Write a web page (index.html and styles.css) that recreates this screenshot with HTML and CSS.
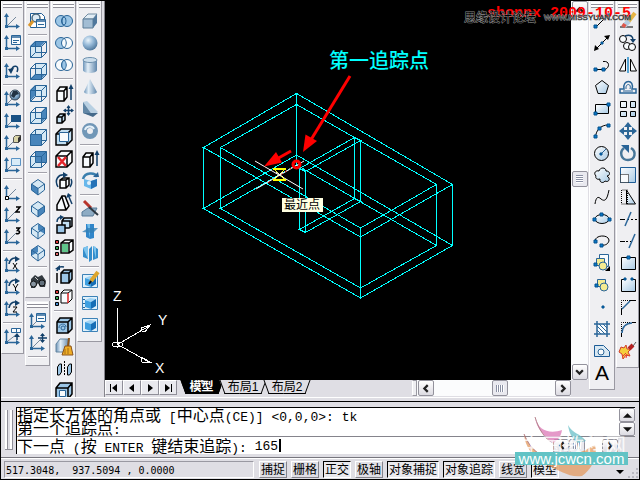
FILE: index.html
```html
<!DOCTYPE html>
<html lang="zh-CN">
<head>
<meta charset="utf-8">
<title>模型</title>
<link rel="stylesheet" href="styles.css">
</head>
<body>
<svg class="defs" aria-hidden="true">
  <defs>
    <linearGradient id="metal" x1="0" y1="0" x2="1" y2="0"><stop offset="0" stop-color="#6b93b8"/><stop offset=".35" stop-color="#e4eff8"/><stop offset="1" stop-color="#5f86ab"/></linearGradient>
    <radialGradient id="ball" cx=".38" cy=".32" r=".7"><stop offset="0" stop-color="#eaf4fb"/><stop offset=".5" stop-color="#93b7d6"/><stop offset="1" stop-color="#50789c"/></radialGradient>
    <linearGradient id="pale" x1="0" y1="0" x2="1" y2="1"><stop offset="0" stop-color="#ffffff"/><stop offset="1" stop-color="#a9cbe6"/></linearGradient>
    <symbol id="axes" viewBox="0 0 22 22"><path class="b" d="M4.500 6V17M4 16.500H15"/><path class="bf" d="M4.500 3L2 7H7zM18 16.500L14 14V19zM3 15h3v3H3z"/></symbol>
    <symbol id="diag" viewBox="0 0 22 22"><path class="g" d="M6 15L14 7"/></symbol>
    <symbol id="wire" viewBox="0 0 22 22"><path class="b1" d="M3.500 8.500h11v11h-11zM8.500 3.500h11v11h-11zM3.500 8.500l5-5M14.500 8.500l5-5M3.500 19.500l5-5M14.500 19.500l5-5"/></symbol>
    <symbol id="iso" viewBox="0 0 22 22"><path class="b1" d="M11 3.500L17.500 8V14L11 19L4.500 14V8zM4.500 8L11 12.500L17.500 8M11 12.500V19"/></symbol>
    <symbol id="bluebox" viewBox="0 0 22 22"><path fill="#9fd4f5" d="M6 8l5-2 6 1-5 3z"/><path fill="#3d9fe0" d="M6 8l6 2v7l-6-2z"/><path fill="#176eb5" d="M12 10l5-3v7l-5 3z"/></symbol>
  </defs>
</svg>

<main class="workspace">
  <div class="dock dock-left">
    <div class="column narrow">
      <div class="toolbar" role="toolbar" aria-label="UCS">
        <button class="tool" aria-label="UCS"><svg><use href="#axes"/><use href="#diag"/></svg></button>
        <button class="tool" aria-label="命名 UCS"><svg><use href="#axes"/><path class="b1 wf" d="M9.500 3.500h9v9h-9z"/><path class="b" d="M9 5h10"/><path class="b1" d="M11 8.500h6M11 10.500h4"/></svg></button>
        <hr>
        <button class="tool" aria-label="上一个 UCS"><svg><use href="#axes"/><path class="n" d="M9 11C11 4 18 5 15 12"/><path class="nf" d="M6 9l6-1-3 6z"/></svg></button>
        <hr>
        <button class="tool" aria-label="世界 UCS"><svg><use href="#axes"/><use href="#diag"/><circle cx="13" cy="7" r="5" fill="url(#ball)" stroke="#345"/><path d="M11 3l4 0 2 3-3 1-2 3-3-2z" fill="#234"/></svg></button>
        <button class="tool" aria-label="对象 UCS"><svg><use href="#axes"/><path class="g" d="M6 15l4-4"/><path fill="#195184" d="M9 5h10v7H9z"/></svg></button>
        <button class="tool" aria-label="面 UCS"><svg><use href="#axes"/><use href="#diag"/><path fill="#d8d3a6" stroke="#555" d="M11.500 5.500l2-2h5v5l-2 2h-5z"/><path fill="#333" d="M16 6l3-3v5l-3 3z"/></svg></button>
        <button class="tool" aria-label="视图 UCS"><svg><use href="#axes"/><path class="g" d="M6 15l4-4"/><path fill="#d8ebf8" stroke="#5b93c4" d="M9.500 4.500h9v7h-9z"/></svg></button>
        <hr>
        <button class="tool" aria-label="原点 UCS"><svg><use href="#axes"/><use href="#diag"/><path class="k1 wf" d="M3.500 14.500h3v3h-3z"/></svg></button>
        <button class="tool" aria-label="Z 轴矢量"><svg><use href="#axes"/><use href="#diag"/><path class="k2" d="M14 3h4l-4 5h4"/></svg></button>
        <button class="tool" aria-label="三点 UCS"><svg><use href="#axes"/><use href="#diag"/><path class="k2" d="M14 2h3.500l-2 2.500c3 0 3 4-1.500 3"/></svg></button>
        <hr>
        <button class="tool" aria-label="绕 X 轴旋转"><svg><use href="#axes"/><path class="n" d="M7 10C8 4 13 3 15 5"/><path class="nf" d="M13 2l5 3-5 3z"/><path class="k1" d="M11 9l4 6M15 9l-4 6"/></svg></button>
        <button class="tool" aria-label="绕 Y 轴旋转"><svg><use href="#axes"/><path class="n" d="M7 10C8 4 13 3 15 5"/><path class="nf" d="M13 2l5 3-5 3z"/><path class="k1" d="M11 8l2.500 4 2.500-4M13.500 12v3"/></svg></button>
        <button class="tool" aria-label="绕 Z 轴旋转"><svg><use href="#axes"/><path class="n" d="M7 10C8 4 13 3 15 5"/><path class="nf" d="M13 2l5 3-5 3z"/><path class="k1" d="M11 9h4l-4 5h4"/></svg></button>
        <hr>
        <button class="tool" aria-label="应用 UCS"><svg><use href="#axes"/><path class="b1 wf" d="M9.500 2.500h9v4h-9zM14.500 2.500v4"/><path class="g" d="M6 15l9-7"/><path class="n" d="M15 14V9"/><path class="nf" d="M12 11l3-4 3 4z"/></svg></button>
      </div>
    </div>

    <div class="column">
      <div class="toolbar" role="toolbar" aria-label="视图">
        <button class="tool" aria-label="命名视图"><svg><path d="M3.500 3.500h11l3 3v11h-14z" fill="#fff" stroke="#1d5c96"/><circle cx="9" cy="8" r="4" fill="#dceaf4" stroke="#49687e" stroke-width="1.500"/><path d="M6 11l-4 5" stroke="#db962b" stroke-width="3"/><path class="b1 wf" d="M9.500 9.500h9v8h-9z"/><path class="b" d="M9 11h10"/><path class="b1" d="M11 14.500h6"/></svg></button>
        <hr>
        <button class="tool" aria-label="俯视"><svg><path class="pf" d="M3 8h11v11H3z"/><path class="df" d="M3 8l5-5h11l-5 5z"/><use href="#wire"/></svg></button>
        <button class="tool" aria-label="仰视"><svg><path class="pf" d="M8 3h11v11H8z"/><path class="df" d="M3 19l5-5h11l-5 5z"/><use href="#wire"/></svg></button>
        <button class="tool" aria-label="左视"><svg><path class="pf" d="M8 3h11v11H8z"/><path class="df" d="M3 8l5-5v11l-5 5z"/><use href="#wire"/></svg></button>
        <button class="tool" aria-label="右视"><svg><path class="pf" d="M3 8h11v11H3z"/><path class="df" d="M14 8l5-5v11l-5 5z"/><use href="#wire"/></svg></button>
        <button class="tool" aria-label="主视"><svg><path class="pf" d="M3 8l5-5h11v11l-5 5H3z"/><use href="#wire"/><path class="df" d="M4 9h10v10H4z"/></svg></button>
        <button class="tool" aria-label="后视"><svg><path class="pf" d="M3 8h11v11H3z"/><path class="df" d="M8 3h11v11H8z"/><use href="#wire"/></svg></button>
        <hr>
        <button class="tool" aria-label="西南等轴测"><svg><path class="pf" d="M11 4l6 4v6l-6 5-6-5V8z"/><path class="df" d="M4 8l7 4v7l-7-5z"/><use href="#iso"/></svg></button>
        <button class="tool" aria-label="东南等轴测"><svg><path class="pf" d="M11 4l6 4v6l-6 5-6-5V8z"/><path class="df" d="M18 8l-7 4v7l7-5z"/><use href="#iso"/></svg></button>
        <button class="tool" aria-label="东北等轴测"><svg><path class="pf" d="M11 4l6 4v6l-6 5-6-5V8z"/><path class="df" d="M11 4l7 4v6l-7-4z"/><use href="#iso"/></svg></button>
        <button class="tool" aria-label="西北等轴测"><svg><path class="pf" d="M11 4l6 4v6l-6 5-6-5V8z"/><path class="df" d="M11 4L4 8v6l7-4z"/><use href="#iso"/></svg></button>
        <hr>
        <button class="tool" aria-label="相机"><svg><path d="M4 9l4-4 3 2 4-2 4 6-1 6h-5l-2-4-3 5H4z" fill="#333a40"/><circle cx="6.500" cy="14" r="3" fill="#8794a0" stroke="#111"/><circle cx="15" cy="13" r="3" fill="#62707c" stroke="#111"/><path d="M8 7l3 3" stroke="#ccc"/></svg></button>
      </div>
      <div class="toolbar" role="toolbar" aria-label="UCS II">
        <button class="tool" aria-label="UCS 设置"><svg><use href="#axes"/><use href="#diag"/><path class="b1 wf" d="M9.500 3.500h9v8h-9z"/><path class="b" d="M9 5h10"/><path class="b1" d="M11 8.500h6"/></svg></button>
        <button class="tool" aria-label="移动 UCS"><svg><use href="#axes"/><use href="#diag"/><path class="n" d="M15.500 2v8M11 6h9"/><path class="nf" d="M13 4l2.500-3L18 4zM13 8l2.500 3L18 8z"/></svg></button>
        <hr>
      </div>
    </div>

    <div class="column">
      <div class="toolbar" role="toolbar" aria-label="实体编辑">
        <button class="tool" aria-label="并集"><svg><circle class="b1 mf" cx="8" cy="11" r="5.500"/><circle class="b1 mf" cx="14" cy="11" r="5.500"/><ellipse class="b1" cx="11" cy="11" rx="2" ry="4"/></svg></button>
        <button class="tool" aria-label="差集"><svg><circle class="b1 mf" cx="8" cy="11" r="5.500"/><circle class="b1 wf" cx="14" cy="11" r="5.500"/><path class="b1" d="M11 6c3 3 3 7 0 10"/></svg></button>
        <button class="tool" aria-label="交集"><svg><circle class="b1 wf" cx="8" cy="11" r="5.500"/><circle class="b1 wf" cx="14" cy="11" r="5.500"/><path class="b1 mf" d="M11 6c3 3 3 7 0 10c-3-3-3-7 0-10z"/></svg></button>
        <hr>
        <button class="tool" aria-label="拉伸面"><svg><path class="k2 wf" d="M4 9l3-4h7v10l-3 4H4zM4 9h7v10M11 9l3-4"/><path class="n" d="M18 18V5"/><path class="nf" d="M15.500 7L18 2l2.500 5z"/></svg></button>
        <button class="tool" aria-label="移动面"><svg><path class="k2 lf" d="M4 13l3-3h5v6l-3 3H4zM4 13h5v6M9 13l3-3"/><path class="n" d="M15.500 2v9M11 6.500h9"/><path class="nf" d="M13.500 4l2-3 2 3zM13.500 9l2 3 2-3zM13 4.500l-3 2 3 2zM18 4.500l3 2-3 2z"/></svg></button>
        <button class="tool" aria-label="偏移面"><svg><path class="k2 lf" d="M3 8l5-5h11v11l-5 5H3z"/><path class="k2" d="M3 8h11v11M14 8l5-5"/><path class="b1 wf" d="M6.500 6.500h9v9h-9z"/></svg></button>
        <button class="tool" aria-label="删除面"><svg><path class="k2 wf" d="M3 8l5-5h11v11l-5 5H3zM3 8h11v11M14 8l5-5"/><path d="M5 9l8 9M13 9l-8 9" stroke="#e3262b" stroke-width="2.500"/></svg></button>
        <button class="tool" aria-label="旋转面"><svg><path class="k2 wf" d="M7 10l3-2h6v7l-3 3H7zM7 10h6v8M13 10l3-2"/><path class="n" d="M5 17C1 10 5 4 12 5M17 17c2-3 2-6 1-8"/><path class="nf" d="M10 2l5 3-5 3z"/></svg></button>
        <button class="tool" aria-label="倾斜面"><svg><path class="k2 wf" d="M4 18V13l5-9h3l4 10-3 4H4zM9 5l4 13"/><path class="n" d="M19 12l-3-7"/><path class="nf" d="M13 6l2-5 4 3z"/></svg></button>
        <button class="tool" aria-label="复制面"><svg><path class="k2 lf" d="M9 7l2-3h8v8l-3 2H9zM9 7h8v7"/><path class="k2 mf" d="M4 11h8v8H4z"/><path class="n" d="M4 8c0-4 2-5 5-5"/><path class="nf" d="M7 1l4 2-4 3z"/></svg></button>
        <button class="tool" aria-label="着色面"><svg><path class="k2 wf" d="M8 7l4-3h8v10l-4 3H8zM8 7h8v10M16 7l4-3"/><path fill="#5fc48a" d="M9 8h6v8H9z"/><path fill="#d33" stroke="#000" d="M2.500 4.500h3v3h-3z"/><path fill="#3a5" stroke="#000" d="M2.500 10.500h3v3h-3z"/><path fill="#d66" stroke="#000" d="M2.500 16.500h3v3h-3z"/></svg></button>
        <hr>
        <button class="tool" aria-label="复制边"><svg><path class="k2 mf" d="M8 9l3-3h8v9l-3 4H8zM8 9h8v10M16 9l3-3"/><path class="k2" d="M4 9v10"/><path class="n" d="M4 7c1-4 3-5 7-4"/><path class="nf" d="M2 5l5-4v5z"/></svg></button>
        <button class="tool" aria-label="着色边"><svg><path class="k1 wf" d="M8 7l3-3h8v9l-4 4H8zM8 7h7M15 7l4-3"/><path d="M15 7v10" stroke="#d22" stroke-width="1.500"/><path fill="#d33" stroke="#000" d="M2.500 4.500h3v3h-3z"/><path fill="#3a5" stroke="#000" d="M2.500 10.500h3v3h-3z"/><path fill="#48c" stroke="#000" d="M2.500 16.500h3v3h-3z"/></svg></button>
        <hr>
        <button class="tool" aria-label="压印"><svg><path class="k2 mf" d="M4 8l3-4h12v11l-4 4H4zM4 8h11v11M15 8l4-4"/><path class="b1" d="M6 14c0-5 7-5 7-1"/><circle class="b1" cx="10" cy="14" r="2"/></svg></button>
        <button class="tool" aria-label="清除"><svg><path fill="url(#metal)" stroke="#6485a0" d="M3 8l4-5h9v13H3z"/><path d="M15 2l2 0-1 8h-2z" fill="#8b541c"/><path d="M12 10h6l2 9H9z" fill="#efad26" stroke="#8b541c"/><path d="M12 13v5M15 12v6" stroke="#a56c12"/></svg></button>
        <button class="tool" aria-label="分割"><svg><path class="k1 mf" d="M4.500 9l2-3h2v8l-2 3h-2zM14.500 9l2-3h2v8l-2 3h-2z"/><path class="k1" stroke-dasharray="2 1" d="M11.500 3v15"/></svg></button>
        <button class="tool" aria-label="抽壳"><svg><path class="k2 mf" d="M3 8l4-5h12v11l-4 5H3zM3 8h12v11M15 8l4-5"/><path class="b1 wf" d="M6.500 10.500h6v6h-6z"/></svg></button>
      </div>
    </div>

    <div class="column">
      <div class="toolbar" role="toolbar" aria-label="实体">
        <button class="tool" aria-label="长方体"><svg><path fill="#e2edf5" stroke="#738da3" d="M4 9l5-5h9l-4 5z"/><path fill="#a2bdd4" stroke="#5c7c97" d="M4 9h10v9H4z"/><path fill="#50789c" d="M14 9l4-5v9l-4 5z"/></svg></button>
        <button class="tool" aria-label="球体"><svg><circle cx="11" cy="11" r="7.500" fill="url(#ball)"/></svg></button>
        <button class="tool" aria-label="圆柱体"><svg><path d="M4 6v10c0 4 14 4 14 0V6z" fill="url(#metal)"/><ellipse cx="11" cy="6" rx="7" ry="2.500" fill="#ccdeec" stroke="#6e91ae"/></svg></button>
        <button class="tool" aria-label="圆锥体"><svg><path d="M11 3L5 16c1 3 12 3 13 0z" fill="url(#metal)"/></svg></button>
        <button class="tool" aria-label="楔体"><svg><path d="M4 4l4-1 11 11-5 4z" fill="#b9d0e2"/><path d="M4 4v11l10 3z" fill="#6287a6"/><path d="M4 15l10 4 5-4" fill="#456a8b"/></svg></button>
        <button class="tool" aria-label="圆环体"><svg><circle cx="11" cy="11" r="5.500" fill="none" stroke="#7197b7" stroke-width="5"/><path d="M6 10c1-4 7-5 9-1" fill="none" stroke="#e5f1f9" stroke-width="2"/></svg></button>
        <hr>
        <button class="tool" aria-label="拉伸"><svg><path class="k2 wf" d="M4 9l3-4h7v10l-3 4H4zM4 9h7v10M11 9l3-4"/><path class="n" d="M18 18V5"/><path class="nf" d="M15.500 7L18 2l2.500 5z"/></svg></button>
        <button class="tool" aria-label="旋转"><svg><path d="M5 9l7 2 6-2v7l-6 3-7-3z" fill="#67b7eb"/><path d="M12 11l6-2v7l-6 3z" fill="#2572b7"/><path d="M4 9c2-7 12-7 14-2" fill="none" stroke="#3a7fae" stroke-width="2.500"/><path class="bf" d="M14 7h6l-1-5z"/><circle cx="10" cy="13" r="2" fill="#e4f1fa"/></svg></button>
        <hr>
        <button class="tool" aria-label="剖切"><svg><path d="M3 14l6-4h9l-4 8H3z" fill="#8eacc4" stroke="#587b98"/><path d="M5 3l7 7" stroke="#b8352c" stroke-width="3"/><path d="M10 9l9 8" stroke="#2d3842" stroke-width="2"/></svg></button>
        <button class="tool" aria-label="切割"><svg><path d="M7 4h8v14l-4 1-4-2z" fill="#3186ca"/><path d="M8 4h3v14" fill="#72bce9"/><path d="M3 12l6-4h10l-5 5z" fill="#337fb5" opacity=".8"/></svg></button>
        <button class="tool" aria-label="干涉"><svg><path d="M4 6l5-2v13l-5-2zM10 7l3-3v14l-3 2zM14 4l5 3v9l-5 2z" fill="#358dcb"/><path d="M4 6l5-2v13M14 4l3 1v12" fill="#7dc4ee"/></svg></button>
        <hr>
        <button class="tool" aria-label="设置图形"><svg><path fill="#e0f1fb" stroke="#3d82b7" d="M3.500 4.500h15v13h-15z"/><use href="#bluebox"/><path d="M19 2l-7 9" stroke="#dda52c" stroke-width="4"/><path d="M12 11l-2 3" stroke="#111" stroke-width="2"/></svg></button>
        <button class="tool" aria-label="设置视图"><svg><path fill="#e0f1fb" stroke="#3d82b7" d="M3.500 4.500h15v13h-15z"/><path class="b1" d="M4 7.500h2M4 11.500h2M4 15.500h2"/><use href="#bluebox"/></svg></button>
        <button class="tool" aria-label="设置轮廓"><svg><path fill="#e0f1fb" stroke="#3d82b7" d="M3.500 4.500h15v13h-15z"/><use href="#bluebox"/></svg></button>
      </div>
    </div>
  </div>

  <section class="drawing" aria-label="绘图区">
    <div class="view">
      <svg class="model" viewBox="105 1 466 379" role="img" aria-label="三维线框">
        <g class="cy" shape-rendering="crispEdges">
          <path d="M296.500 93.500L203.500 147.500L360.500 237L452.500 184.500zM296.500 104.500L220.500 147.500L360.500 228L436.500 184.500z"/>
          <path d="M296.500 155L203.500 208.500L360.500 298L452.500 245.500zM296.500 165L220.500 208.500L360.500 288L436.500 245.500z"/>
          <path d="M296.500 93.500V165M203.500 147.500V208.500M220.500 147.500V208.500M452.500 184.500V245.500M436.500 184.500V245.500M360.500 228V298"/>
          <path d="M354.500 137.500L299.500 168.500L305.500 171.500L360.500 140.500zM354.500 198.500L299.500 229.500L305.500 232.500L360.500 201.500zM354.500 137.500V198.500M360.500 140.500V201.500M299.500 168.500V229.500M305.500 171.500V232.500"/>
        </g>
        <path class="wl" d="M255 161L303 189M304 161L256 189"/>
        <path d="M291 168L266 184" stroke="#f00" stroke-dasharray="2 3"/>
        <path d="M273 169h13M273 180h13" stroke="#ff0" stroke-width="2"/>
        <path d="M275 170l9 9M284 170l-9 9" stroke="#ff0"/>
        <path d="M276 172l7 5M283 172l-7 5" stroke="#fff"/>
        <circle cx="296.500" cy="164.500" r="3.500" fill="none" stroke="#f00" stroke-width="3"/>
        <path d="M350 76L309 143" stroke="#f00" stroke-width="3"/>
        <path d="M303 152L305.500 134.500L317 141z" fill="#f00"/>
        <path d="M291 151L275 160" stroke="#f00" stroke-width="3"/>
        <path d="M264 166.500L276 152L282 162.500z" fill="#f00"/>
        <g class="wl" shape-rendering="crispEdges">
          <path d="M117.500 344.500V308M117.500 344.500L150 325.500M117.500 344.500L150 362.500"/>
          <ellipse cx="117.500" cy="344.500" rx="5" ry="2.500"/>
          <path d="M141 328l9-3-5 7-3-1zM141 357l9 5-8 0-1-3z"/>
        </g>
        <g class="axis-name"><text x="113" y="301">Z</text><text x="158" y="325">Y</text><text x="155" y="373">X</text></g>
        <text class="callout" x="329" y="68">第一追踪点</text>
        <rect x="282" y="198" width="41" height="14" fill="#ffffe1"/>
        <text class="snap" x="284" y="209">最近点</text>
      </svg>
      <div class="vscroll">
        <button class="sb" aria-label="向上"><svg viewBox="0 0 8 8"><path d="M1 6l3-3 3 3"/></svg></button>
        <div class="track"><span class="thumb"></span></div>
        <button class="sb" aria-label="向下"><svg viewBox="0 0 8 8"><path d="M1 2l3 3 3-3"/></svg></button>
      </div>
    </div>
    <div class="sheetbar">
      <div class="nav">
        <button aria-label="第一个"><svg viewBox="0 0 10 10"><path d="M1 1h1v8H1zM8 1v8L3 5z"/></svg></button>
        <button aria-label="上一个"><svg viewBox="0 0 10 10"><path d="M7 1v8L2 5z"/></svg></button>
        <button aria-label="下一个"><svg viewBox="0 0 10 10"><path d="M3 1v8l5-4z"/></svg></button>
        <button aria-label="最后一个"><svg viewBox="0 0 10 10"><path d="M8 1h1v8H8zM2 1v8l5-4z"/></svg></button>
      </div>
      <div class="tabs" role="tablist">
        <button class="tab on" role="tab" aria-selected="true"><span>模型</span></button>
        <button class="tab" role="tab"><span>布局1</span></button>
        <button class="tab" role="tab"><span>布局2</span></button>
      </div>
      <div class="hscroll">
        <span class="split"></span>
        <button class="sb" aria-label="向左"><svg viewBox="0 0 8 8"><path d="M6 1L3 4l3 3"/></svg></button>
        <div class="track"><span class="thumb"></span></div>
        <button class="sb" aria-label="向右"><svg viewBox="0 0 8 8"><path d="M2 1l3 3-3 3"/></svg></button>
      </div>
    </div>
  </section>

  <div class="dock dock-right">
    <div class="column wide">
      <div class="toolbar" role="toolbar" aria-label="绘图">
        <button class="tool" aria-label="直线"><svg><path class="k1" d="M5 17L17 5"/><path class="dot" d="M3 15h3v3H3zM16 4h3v3h-3z"/></svg></button>
        <button class="tool" aria-label="构造线"><svg><path class="k1" d="M4 18L18 4"/><path d="M3 19l1-6 4 4zM19 3l-6 1 4 4z"/><path class="dot" d="M10 10h2v2h-2z"/></svg></button>
        <button class="tool" aria-label="多段线"><svg><path class="k1" d="M5 15.500h8M12 7.500c7-1 7 6 2 8"/><path class="dot" d="M3 14h3v3H3zM11 14h3v3h-3z"/></svg></button>
        <button class="tool" aria-label="正多边形"><svg><path class="k" fill="url(#pale)" d="M11 4.500l6.500 5-2.500 8H7L4.500 9.500z"/></svg></button>
        <button class="tool" aria-label="矩形"><svg><path class="k" fill="url(#pale)" d="M4.500 6.500h13v9h-13z"/><path class="dot" d="M3 14h3v3H3zM16 5h3v3h-3z"/></svg></button>
        <button class="tool" aria-label="圆弧"><svg><path class="k1" d="M4.500 17C5 10 10 5 17 5"/><path class="dot" d="M3 15h3v3H3zM7 7h3v3H7zM16 4h3v3h-3z"/></svg></button>
        <button class="tool" aria-label="圆"><svg><circle class="k" fill="url(#pale)" cx="10.500" cy="11.500" r="7"/><path class="b1" d="M10 12l5-5"/><path class="dot" d="M9 11h2v2H9z"/></svg></button>
        <button class="tool" aria-label="修订云线"><svg><path class="k" fill="url(#pale)" d="M5 12c-3-3 0-6 3-5 1-4 7-4 7 0 5 0 4 5 1 5 4 2 2 7-2 5-2 3-6 1-5-2-3 1-5-1-4-3z"/></svg></button>
        <button class="tool" aria-label="样条曲线"><svg><path class="k1" d="M4 18c1-7 3-8 6-5 4 3 6 1 8-9"/></svg></button>
        <button class="tool" aria-label="椭圆"><svg><ellipse class="k" fill="url(#pale)" cx="11" cy="11" rx="7" ry="4.500"/><path class="dot" d="M2 10h3v3H2zM9 5h3v3H9zM17 10h3v3h-3z"/></svg></button>
        <button class="tool" aria-label="椭圆弧"><svg><path class="k1" d="M4 11c0-6 13-7 14-1 0 3-3 6-8 5"/><path class="dot" d="M3 10h3v3H3zM9 14h3v3H9z"/></svg></button>
        <button class="tool" aria-label="插入块"><svg><path class="b1 wf" d="M8.500 2.500h9v12h-9z"/><path class="b1 yf" d="M5.500 6.500h8v7h-8z"/><circle class="b1 yf" cx="12" cy="14" r="4"/><path class="dot" d="M3 11h3v3H3z"/><path d="M19 14v5h-5z"/></svg></button>
        <button class="tool" aria-label="创建块"><svg><path class="b1 yf" d="M6.500 5.500h8v7h-8z"/><circle class="b1 yf" cx="13" cy="13" r="4"/><path class="dot" d="M4 10h3v3H4z"/></svg></button>
        <button class="tool" aria-label="点"><svg><path class="dot" d="M11 10h2v2h-2z"/></svg></button>
        <button class="tool" aria-label="图案填充"><svg><path class="wf" d="M6 6h10v10H6z"/><path class="b" d="M6 3v16M16 3v16M3 6h16M3 16h16"/><path class="b1" d="M6 12l4 4M6 8l8 8M8 6l8 8M12 6l4 4"/></svg></button>
        <button class="tool" aria-label="面域"><svg><path fill="#d9e8f2" stroke="#1d5c96" d="M3.500 5.500h9l6 6v5h-15z"/><circle class="b1 wf" cx="10" cy="12" r="3"/></svg></button>
        <button class="tool" aria-label="多行文字"><span class="letter">A</span></button>
      </div>
    </div>
    <div class="column last">
      <div class="toolbar" role="toolbar" aria-label="修改">
        <button class="tool" aria-label="删除"><svg><path class="k1" d="M3 17h13"/><path d="M18 3l-7 9" stroke="#e7b445" stroke-width="4"/><path d="M12 11l-5 5" stroke="#b5cde0" stroke-width="5"/><path d="M8 14l-2 3" stroke="#df574b" stroke-width="4"/></svg></button>
        <button class="tool" aria-label="复制"><svg><circle class="k1 wf" cx="6" cy="7" r="3.500"/><circle class="k1 wf" cx="10" cy="14" r="3.500"/><circle class="k1 wf" cx="15" cy="15" r="3.500"/><path class="n" d="M8 4c5-2 8 0 8 4"/><path class="nf" d="M13 7h6l-3 4z"/></svg></button>
        <button class="tool" aria-label="镜像"><svg><path class="k1 wf" d="M8.500 5v12h-6zM13.500 5v12h6z"/><path d="M11 3v16" stroke="#258bc9" stroke-width="1.500"/></svg></button>
        <button class="tool" aria-label="偏移"><svg><path class="b" d="M3 17h16v-4h-4c3-10-10-10-8 0H3z"/><path class="b1" d="M6 15h10M9 13c-1-6 6-6 4 0"/></svg></button>
        <button class="tool" aria-label="阵列"><svg><path class="k" fill="url(#pale)" d="M3.500 3.500h6v6h-6zM13.500 3.500h5v6h-5zM3.500 13.500h6v5h-6zM13.500 13.500h5v5h-5z"/></svg></button>
        <button class="tool" aria-label="移动"><svg><path d="M11 5v12M5 11h12" stroke="#2d6795" stroke-width="2"/><path class="bf" d="M11 2l4 5H7zM11 20l4-5H7zM2 11l5-4v8zM20 11l-5-4v8z"/></svg></button>
        <button class="tool" aria-label="旋转"><svg><path d="M7 6c-5 4-3 12 4 12s9-8 3-12" fill="none" stroke="#477699" stroke-width="2.500"/><path class="bf" d="M4 3h8v8z"/></svg></button>
        <button class="tool" aria-label="缩放"><svg><path fill="url(#pale)" stroke="#1d5c96" d="M3.500 3.500h15v15h-15z"/><path class="k1 wf" stroke-dasharray="1 1" d="M3.500 10.500h8v8h-8z"/></svg></button>
        <button class="tool" aria-label="拉伸"><svg><path class="k" fill="url(#pale)" d="M9.500 4l9 14h-9z"/><path class="k1" stroke-dasharray="1 1" d="M4.500 4v14h6V4z"/></svg></button>
        <button class="tool" aria-label="修剪"><svg><path class="k1" d="M3 11.500h5"/><path class="k1" stroke-dasharray="2 2" d="M10 11.500h10"/><path class="b" d="M8 18l6-14"/></svg></button>
        <button class="tool" aria-label="延伸"><svg><path class="k1" d="M3 11.500h5"/><path class="k1" stroke-dasharray="2 2" d="M9 11.500h5"/><path class="b" d="M12 18l6-14"/></svg></button>
        <button class="tool" aria-label="打断于点"><svg><path class="k" fill="url(#pale)" d="M4.500 5.500h14v12h-14z"/><path class="dot" d="M10 4h3v3h-3z"/></svg></button>
        <button class="tool" aria-label="打断"><svg><path fill="url(#pale)" d="M4 6h14v11H4z"/><path class="k1" d="M7 5.500H4.500v12h14v-12H15"/><path class="dot" d="M7 4h2v2H7zM14 4h2v2h-2z"/></svg></button>
        <button class="tool" aria-label="倒角"><svg><path class="k1" stroke-dasharray="1 1" d="M4.500 13V4.500H14"/><path class="k1" d="M4.500 19v-6M13 4.500h6"/><path class="b" d="M5 13l8-8"/></svg></button>
        <button class="tool" aria-label="圆角"><svg><path class="k1" stroke-dasharray="1 1" d="M4.500 13V4.500H14"/><path class="k1" d="M4.500 19v-4M15 4.500h4"/><path class="b" d="M5 15c0-6 4-10 10-10"/></svg></button>
        <button class="tool" aria-label="分解"><svg><path d="M4 7l3 1 2-3 1 4 4 0-3 3 2 4-4-1-3 4-1-5-3-2z" fill="#f4cf3d" stroke="#d23b28"/><path d="M12 9l4-4" stroke="#b52222" stroke-width="4"/><path d="M16 6l3-4" stroke="#555"/><path d="M5 17l4-4M9 18l1-4" stroke="#e33"/></svg></button>
      </div>
    </div>
  </div>
</main>

<section class="command" aria-label="命令行">
  <span class="handle"></span>
  <div class="console">
    <div class="history">
      <div class="log">
        <p>指定长方体的角点或<span class="latin"> [</span>中心点<span class="latin">(CE)] &lt;0,0,0&gt;: tk</span></p>
        <p>第一个追踪点<span class="latin">:</span></p>
      </div>
      <div class="updown">
        <button class="sb" aria-label="上一行"><svg viewBox="0 0 8 8"><path class="fill" d="M0 6l4-4 4 4z"/></svg></button>
        <button class="sb" aria-label="下一行"><svg viewBox="0 0 8 8"><path class="fill" d="M0 2l4 4 4-4z"/></svg></button>
      </div>
    </div>
    <div class="entry">
      <label for="cmd">下一点<span class="latin"> (</span>按<span class="latin"> ENTER </span>键结束追踪<span class="latin">): </span></label>
      <input id="cmd" class="latin" type="text" value="165"><span class="caret"></span>
      <div class="leftright">
        <button class="sb" aria-label="向左"><svg viewBox="0 0 8 8"><path d="M6 1L3 4l3 3"/></svg></button>
        <div class="track"><span class="thumb"></span></div>
        <button class="sb" aria-label="向右"><svg viewBox="0 0 8 8"><path d="M2 1l3 3-3 3"/></svg></button>
      </div>
    </div>
  </div>
</section>

<footer class="status">
  <output class="coords">517.3048,  937.5094 , 0.0000</output>
  <button class="mode">捕捉</button>
  <button class="mode">栅格</button>
  <button class="mode down" aria-pressed="true">正交</button>
  <button class="mode">极轴</button>
  <button class="mode down" aria-pressed="true">对象捕捉</button>
  <button class="mode down" aria-pressed="true">对象追踪</button>
  <button class="mode">线宽</button>
  <button class="mode down" aria-pressed="true">模型</button>
  <button class="menu" aria-label="状态栏菜单"><svg viewBox="0 0 8 5"><path d="M0 0h8L4 4z"/></svg></button>
  <svg class="resize" viewBox="0 0 10 10"><path d="M8 0h2v2H8zM8 4h2v2H8zM8 8h2v2H8zM4 4h2v2H4zM4 8h2v2H4zM0 8h2v2H0z"/></svg>
</footer>

<div class="stamp"><span class="date">shonnx 2009-10-5</span><span class="forum">思缘设计论坛</span><span class="site">WWW.MISSYUAN.COM</span></div>
<div class="logo">
  <svg viewBox="0 0 120 64">
    <path d="M27 3c3 14 15 17 27 13-1 7-5 11-9 13C36 22 28 14 27 3z" fill="#dd78b7"/>
    <path d="M60 11c5 9 12 8 18 16l-9 2c-5-5-8-10-9-18z" fill="#69bfc8"/>
    <path d="M16 20c6 14 15 23 32 24 17 0 28-8 39-13 3 12-3 24-13 31-13 2-22-6-38-12C25 43 17 33 16 20z" fill="#e39a60"/>
    <path d="M27 3c4 13 10 22 18 26M16 20c6 15 16 23 30 26" fill="none" stroke="#9e5a66"/>
  </svg>
  <span class="brand">中国教程网</span>
  <span class="url">www.jcwcn.com</span>
</div>
</body>
</html>
```
FILE: styles.css
```css
* { box-sizing: border-box; }

:root {
  --face: #dfdee4;
  --bar: #efeff2;
  --edge: #9a99a2;
  --blue: #2a6598;
}

body {
  margin: 0;
  height: 100vh;
  display: flex;
  flex-direction: column;
  position: relative;
  overflow: hidden;
  border: 1px solid #000;
  background: var(--face);
  color: #000;
  font: 12px/14px "Liberation Sans", "Noto Sans CJK SC", sans-serif;
}

button {
  margin: 0;
  padding: 0;
  border: 0;
  background: none;
  color: inherit;
  font: inherit;
}

.defs { position: absolute; width: 0; height: 0; }

.workspace { flex: 1; min-height: 0; display: flex; overflow: hidden; }

/* Docked toolbars */
.dock { display: flex; flex: none; gap: 1px; overflow: hidden; }
.dock-left { padding-right: 2px; border-right: 1px solid #85848c; }
.dock-right { padding-left: 1px; }
.column { width: 25px; display: flex; flex-direction: column; gap: 3px; }
.column.narrow { width: 23px; }
.column.wide { width: 26px; }
.column.last { width: 23px; }

.toolbar {
  display: flex;
  flex-direction: column;
  align-items: center;
  flex: none;
  padding-bottom: 5px;
  background: var(--bar);
  border-left: 1px solid #fff;
  border-right: 1px solid var(--edge);
  border-bottom: 1px solid var(--edge);
}

.toolbar::before {
  content: "";
  align-self: stretch;
  height: 6px;
  margin: 1px 1px 2px;
  background: linear-gradient(#fff 0 2px, #8f8e98 2px 3px, #fff 3px 5px, #8f8e98 5px 6px);
}

.toolbar hr {
  width: 19px;
  height: 2px;
  margin: 2px 0;
  border: 0;
  background: #a3a2ab;
  border-bottom: 1px solid #fff;
}

.tool { width: 22px; height: 22px; display: grid; place-items: center; flex: none; }
.tool svg { width: 22px; height: 22px; display: block; }
.letter { font: 21px/22px "Liberation Sans", sans-serif; }

/* Icon strokes and fills */
.b { fill: none; stroke: var(--blue); stroke-width: 1.5; }
.b1 { fill: none; stroke: var(--blue); }
.bf { fill: var(--blue); }
.g { fill: none; stroke: #75889c; }
.n { fill: none; stroke: #123f69; stroke-width: 1.5; }
.nf { fill: #123f69; }
.k { stroke: #000; }
.k1 { fill: none; stroke: #000; }
.k2 { fill: none; stroke: #000; stroke-width: 1.5; }
.wf { fill: #f8fbfd; }
.lf { fill: #c3dff2; }
.mf { fill: #9cc6e6; }
.pf { fill: #d5e8f4; }
.df { fill: #4885bb; }
.yf { fill: #f4eb91; }
.dot { fill: #0878c9; stroke: #05518c; }

/* Drawing area */
.drawing { flex: 1; min-width: 0; display: flex; flex-direction: column; }
.view { flex: 1; min-height: 0; display: flex; background: #000; }
.model { flex: 1; min-width: 0; width: 100%; height: 100%; display: block; }
.cy { fill: none; stroke: #0ff; }
.wl { fill: none; stroke: #fff; }
.axis-name { fill: #fff; font: 14px "Liberation Sans", sans-serif; }
.callout { fill: #0ff; font: 500 20px "Noto Sans CJK SC", sans-serif; }
.snap { fill: #000; font: 12px "Noto Sans CJK SC", sans-serif; }

/* Scroll bars */
.sb {
  flex: none;
  width: 16px;
  height: 16px;
  display: grid;
  place-items: center;
  background: linear-gradient(#fff, #dcdbe2);
  border: 1px solid #93929c;
  border-radius: 2px;
}
.sb svg { width: 9px; height: 9px; }
.sb path { fill: none; stroke: #222; stroke-width: 2; }
.sb .fill { fill: #111; stroke: none; }
.track { flex: 1; display: flex; align-items: center; justify-content: center; }
.thumb {
  width: 16px;
  height: 16px;
  border: 1px solid #93929c;
  border-radius: 2px;
  background:
    repeating-linear-gradient(90deg, #8a90a4 0 1px, #fff 1px 2px) center / 8px 7px no-repeat,
    #e9e9ef;
}
.vscroll { flex: none; width: 17px; display: flex; flex-direction: column; align-items: center; background: #fbfcfd; }
.vscroll .track { padding-bottom: 24px; }
.vscroll .thumb {
  background:
    repeating-linear-gradient(#8a90a4 0 1px, #fff 1px 2px) center / 7px 8px no-repeat,
    #e9e9ef;
}

/* Layout tabs */
.sheetbar { flex: none; height: 17px; display: flex; align-items: flex-start; background: var(--face); }
.nav { display: flex; }
.nav button { width: 18px; height: 15px; display: grid; place-items: center; background: #e9e9ee; border: 1px solid #fff; border-right-color: #8f8e98; border-bottom-color: #8f8e98; }
.nav svg { width: 10px; height: 10px; }
.tabs { display: flex; margin-left: 6px; gap: 2px; }
.tab { position: relative; width: 42px; height: 14px; line-height: 14px; }
.tab span { position: relative; z-index: 1; }
.tab::before, .tab::after { content: ""; position: absolute; top: 0; bottom: 0; width: 50%; background: var(--face); border-bottom: 1px solid #000; }
.tab::before { left: 0; border-left: 1px solid #000; transform: skewX(20deg); }
.tab::after { right: 0; border-right: 1px solid #000; transform: skewX(-20deg); }
.tab.on { width: 37px; color: #fff; font-weight: bold; }
.tab.on::before, .tab.on::after { background: #000; }
.hscroll { flex: none; width: 33%; margin: 0 17px 0 auto; display: flex; height: 16px; background: #fbfcfd; }
.hscroll .track { padding-left: 12px; }
.split { width: 5px; background: var(--bar); border: 1px solid var(--edge); border-left-color: #fff; margin-right: 1px; }

/* Command window */
.command {
  flex: none;
  display: flex;
  padding: 9px 4px 3px;
  border-top: 1px solid #fff;
  border-bottom: 1px solid #77767e;
  background: linear-gradient(var(--face) 0 3px, #000 3px 4px, var(--face) 4px);
}
.handle { flex: none; width: 8px; margin: 3px 3px 4px 0; border: 1px solid #8f8e98; border-width: 0 1px 1px 0; background: linear-gradient(90deg, #fff 0 2px, #8f8e98 2px 3px, var(--face) 3px 5px, #fff 5px); }
.console { flex: 1; min-width: 0; border: 1px solid #000; border-right: 0; border-bottom: 0; }
.history { display: flex; background: #fff; border-bottom: 1px solid #85848c; }
.log { flex: 1; min-width: 0; font: 16px/13px "Noto Sans CJK SC", sans-serif; }
.log p { margin: 0; height: 13px; white-space: pre; }
.latin { font-family: "Liberation Mono", monospace; font-size: 13px; }
.updown { display: flex; flex-direction: column; }
.updown .sb { height: 14px; }
.entry { display: flex; align-items: center; height: 17px; margin-right: 17px; background: #fff; font: 16px/17px "Noto Sans CJK SC", sans-serif; white-space: pre; }
.entry label, .entry input { height: 17px; line-height: 17px; }
.entry input { width: 24px; padding: 2px 0 0; border: 0; outline: 0; background: none; }
.caret { width: 2px; height: 13px; background: #000; }
.leftright { display: flex; width: 65px; margin-left: auto; }
.leftright .sb, .leftright .thumb { height: 14px; }
.leftright .track { justify-content: flex-start; }

/* Status bar */
.status { flex: none; height: 21px; display: flex; align-items: stretch; gap: 4px; padding: 2px 1px 1px 3px; border-top: 1px solid #fff; }
.coords { width: 250px; padding-left: 1px; font: 10px/18px "DejaVu Sans Mono", monospace; white-space: pre; border: 1px solid var(--edge); border-right-color: #fff; border-bottom-color: #fff; margin-right: 1px; }
.mode { padding: 0 1px; line-height: 16px; border: 1px solid #fff; border-right-color: #85848c; border-bottom-color: #85848c; }
.mode.down { border-color: #000 #fff #fff #000; background: #e9e9ee; }
.menu { margin-left: auto; padding-top: 5px; }
.menu svg { width: 8px; height: 5px; display: block; }
.resize { width: 10px; height: 10px; align-self: flex-end; fill: #b9b8c1; }

/* Overlaid marks */
.stamp { position: absolute; right: 8px; top: 3px; width: 167px; height: 18px; pointer-events: none; white-space: nowrap; }
.stamp span { position: absolute; }
.forum { left: 0; top: 6px; color: #000; font: 12px/14px "Noto Sans CJK SC", sans-serif; -webkit-text-stroke: 1px #8c8c8c; paint-order: stroke; }
.site { right: 0; top: 9px; color: #222; font: 8px/10px "Liberation Sans", sans-serif; -webkit-text-stroke: 1px #9a9a9a; paint-order: stroke; }
.date { right: 0; top: 1px; color: #f00; font: bold 15px/18px "Liberation Mono", monospace; }

.logo { position: absolute; right: 11px; bottom: 1px; width: 120px; height: 64px; pointer-events: none; }
.logo svg { width: 120px; height: 64px; opacity: .75; display: block; }
.brand { position: absolute; right: 2px; top: 20px; color: #fff; opacity: .8; font: 21px/20px "Noto Sans CJK SC", sans-serif; white-space: nowrap; }
.url { position: absolute; right: 0; top: 38px; width: 113px; height: 13px; background: #62c3c5; color: #fff; font: 15px/13px "Liberation Sans", sans-serif; text-align: center; }
```
